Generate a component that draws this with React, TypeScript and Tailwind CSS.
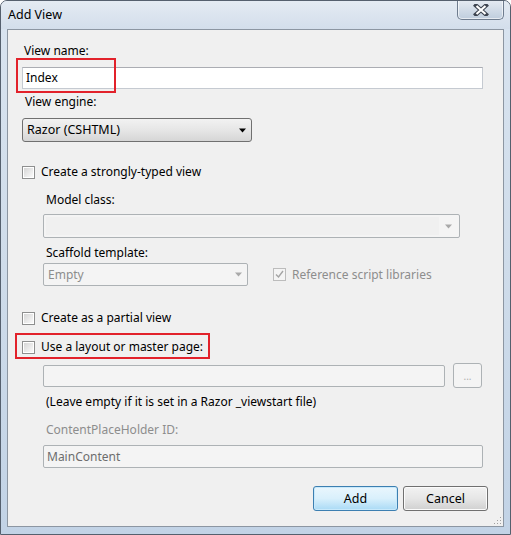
import React from "react";

const font = { fontFamily: '"Noto Sans", "Open Sans", sans-serif' };

function CheckBox({ checked = false, disabled = false }: { checked?: boolean; disabled?: boolean }) {
  return (
    <div
      className={`w-[13px] h-[13px] border p-[1px] shrink-0 ${
        disabled ? "border-[#bcbcbc] bg-[#f4f4f4]" : "border-[#8e8f8f] bg-white"
      }`}
    >
      <div
        className={`w-full h-full flex items-center justify-center ${
          disabled ? "bg-[#f4f4f4]" : "bg-gradient-to-br from-[#d6d6d6] to-[#fafafa]"
        }`}
      >
        {checked && (
          <svg width="9" height="9" viewBox="0 0 9 9">
            <path d="M1 4.5 L3.5 7 L8 1" fill="none" stroke="#a4a4a4" strokeWidth="1.4" />
          </svg>
        )}
      </div>
    </div>
  );
}

function Arrow({ color = "#000", size = 7 }: { color?: string; size?: number }) {
  return (
    <svg width={size} height={Math.ceil(size / 2) + 1} viewBox="0 0 7 4">
      <path d="M0 0 H7 L3.5 4 Z" fill={color} />
    </svg>
  );
}

export default function App() {
  return (
    <div className="w-[511px] h-[535px] bg-white" style={font}>
      <div className="relative w-full h-full rounded-t-[7px] border border-[#55606e] bg-gradient-to-b from-[#d9e4f0] via-[#cfdcea] to-[#c2d3e6] flex flex-col overflow-hidden">
        {/* title bar */}
        <div className="h-[28px] flex items-start justify-between bg-gradient-to-b from-[#e4ebf3] to-[#d3deeb] shrink-0">
          <span className="ml-[7px] mt-[5px] text-[12.5px] text-black leading-[18px]">Add View</span>
          <div className="mr-[6px] -mt-[1px] w-[47px] h-[20px] rounded-b-[5px] border border-[#6e7c8e] border-t-0 bg-gradient-to-b from-[#e6ecf3] to-[#bfcddd] flex items-center justify-center shadow-[inset_0_0_0_1px_rgba(255,255,255,0.6)]">
            <svg width="16" height="12" viewBox="0 0 16 12">
              <path d="M3 1.5 L13 10.5 M13 1.5 L3 10.5" stroke="#3d4450" strokeWidth="4.2" strokeLinecap="square" />
              <path d="M3.5 2 L12.5 10 M12.5 2 L3.5 10" stroke="#ffffff" strokeWidth="2.2" />
            </svg>
          </div>
        </div>

        {/* client area */}
        <div className="relative mx-[6px] mb-[7px] flex-1 border border-[#8c96a2] bg-[#f0f0f0] px-[14px] text-[12px] leading-[16px] text-black">
          <div className="mt-[13px] pl-[2px]">View name:</div>
          <div className="mt-[8px] h-[22px] w-[461px] border border-[#c5cad1] border-t-[#abadb3] bg-white flex items-center pl-[3px]">
            Index
          </div>
          <div className="mt-[5px] pl-[3px]">View engine:</div>
          <div className="mt-[8px] h-[24px] w-[230px] rounded-[3px] border border-[#707070] bg-gradient-to-b from-[#f2f2f2] via-[#e6e6e6] to-[#d6d6d6] flex items-center justify-between pl-[4px] pr-[5px] text-[12.5px]">
            <span>Razor (CSHTML)</span>
            <Arrow />
          </div>

          <div className="mt-[22px] flex items-center gap-[6px] h-[16px]">
            <CheckBox />
            <span>Create a strongly-typed view</span>
          </div>

          <div className="ml-[21px]">
            <div className="mt-[12px] pl-[3px]">Model class:</div>
            <div className="mt-[6px] h-[24px] w-[417px] rounded-[2px] border border-[#adb2b5] bg-[#f4f4f4] flex items-center p-[2px]">
              <div className="flex-1 h-full bg-[#f0f0f0]" />
              <div className="w-[18px] flex justify-center">
                <Arrow color="#a9a9a9" size={7} />
              </div>
            </div>
            <div className="mt-[7px] pl-[3px]">Scaffold template:</div>
            <div className="mt-[2px] flex items-center h-[23px]">
              <div className="h-[23px] w-[205px] rounded-[2px] border border-[#adb2b5] bg-[#f4f4f4] flex items-center justify-between pl-[4px] pr-[5px] text-[#8d8d8d]">
                <span>Empty</span>
                <Arrow color="#a9a9a9" size={7} />
              </div>
              <div className="ml-[25px] flex items-center gap-[6px] text-[#8d8d8d]">
                <CheckBox checked disabled />
                <span>Reference script libraries</span>
              </div>
            </div>
          </div>

          <div className="mt-[24px] flex items-center gap-[6px] h-[16px]">
            <CheckBox />
            <span>Create as a partial view</span>
          </div>
          <div className="mt-[13px] flex items-center gap-[6px] h-[16px]">
            <CheckBox />
            <span>Use a layout or master page:</span>
          </div>

          <div className="ml-[21px]">
            <div className="mt-[8px] flex items-center gap-[8px] h-[25px]">
              <div className="h-[22px] w-[402px] rounded-[2px] border border-[#adb2b5] bg-[#f4f4f4]" />
              <div className="h-[25px] w-[29px] rounded-[3px] border border-[#adb2b5] bg-[#f4f4f4] flex items-center justify-center text-[10px] text-[#b0b0b0] leading-none">
                ...
              </div>
            </div>
            <div className="mt-[6px] pl-[3px]">(Leave empty if it is set in a Razor _viewstart file)</div>
            <div className="mt-[12px] pl-[3px] text-[#8d8d8d]">ContentPlaceHolder ID:</div>
            <div className="mt-[7px] h-[23px] w-[440px] rounded-[2px] border border-[#adb2b5] bg-[#f4f4f4] flex items-center pl-[3px] text-[#6d6d6d]">
              MainContent
            </div>
          </div>

          <div className="mt-[18px] flex justify-end gap-[5px] pr-[1px]">
            <div className="h-[25px] w-[85px] rounded-[3px] border border-[#3c7fb1] bg-gradient-to-b from-[#eaf6fd] via-[#d9f0fc] to-[#a9daf5] flex items-center justify-center text-[12.5px] shadow-[inset_0_0_0_1px_#c8e9fb]">
              Add
            </div>
            <div className="h-[25px] w-[85px] rounded-[3px] border border-[#707070] bg-gradient-to-b from-[#f2f2f2] via-[#e6e6e6] to-[#d0d0d0] flex items-center justify-center text-[12.5px] shadow-[inset_0_0_0_1px_#fbfbfb]">
              Cancel
            </div>
          </div>

          {/* resize grip */}
          <svg className="absolute right-[1px] bottom-[1px]" width="10" height="10" viewBox="0 0 10 10">
            <g fill="#a0a0a0">
              <rect x="8" y="2" width="1" height="1" />
              <rect x="5" y="5" width="1" height="1" />
              <rect x="8" y="5" width="1" height="1" />
              <rect x="2" y="8" width="1" height="1" />
              <rect x="5" y="8" width="1" height="1" />
              <rect x="8" y="8" width="1" height="1" />
            </g>
          </svg>

          {/* red annotation boxes */}
          <div className="absolute left-[8px] top-[28px] w-[100px] h-[35px] border-2 border-[#e2222b]" />
          <div className="absolute left-[7px] top-[303px] w-[195px] h-[26px] border-2 border-[#e2222b]" />
        </div>
      </div>
    </div>
  );
}
